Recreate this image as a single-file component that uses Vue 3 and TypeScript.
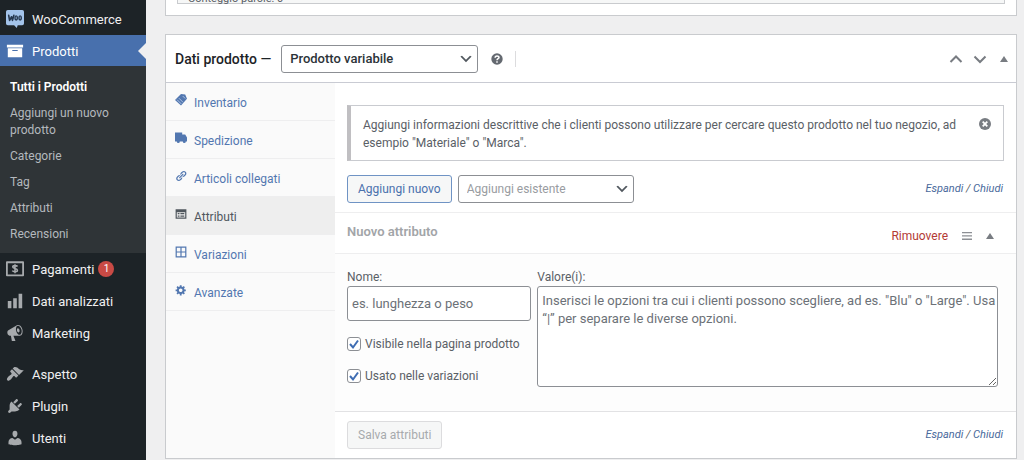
<script setup lang="ts">
import { ref } from 'vue'

interface Tab {
  id: string
  label: string
}

const icons = {
  products: 'M19 3v3H1V3h18zM2 7h16v10H2V7zm11 3V9H7v1h6z',
  chart: 'M18 18V2h-4v16h4zm-6 0V7H8v11h4zm-6 0v-8H2v8h4z',
  megaphone:
    'M18.15 5.94c.46 1.62.38 3.22-.02 4.48-.42 1.28-1.26 2.18-2.3 2.48-.16.06-.26.06-.4.06-.06.02-.12.02-.18.02-.06.02-.14.02-.22.02h-6.8l2.22 5.5c.02.14-.06.26-.14.34-.08.1-.24.16-.34.16H6.95c-.1 0-.26-.06-.34-.16-.08-.08-.16-.2-.14-.34l-1-5.5H4.25l-.02-.02c-.5.06-1.08-.18-1.54-.62s-.88-1.08-1.06-1.88c-.24-.8-.2-1.56-.02-2.2.18-.62.58-1.08 1.06-1.3l.02-.02 9-5.4c.1-.06.18-.1.24-.16.06-.04.14-.08.24-.12.16-.08.28-.12.5-.18 1.04-.3 2.24.1 3.22.98s1.84 2.24 2.26 3.86zm-2.58 5.98h-.02c.4-.1.74-.34 1.04-.7.58-.7.86-1.76.86-3.04 0-.64-.1-1.3-.28-1.98-.34-1.36-1.02-2.5-1.78-3.24s-1.68-1.1-2.46-.88c-.82.22-1.4.96-1.7 2-.32 1.04-.28 2.36.06 3.72.38 1.36 1 2.5 1.8 3.24.78.74 1.62 1.1 2.48.88zm-2.54-7.08c.22-.04.42-.02.62.04.38.16.76.48 1.02 1s.42 1.2.42 1.78c0 .3-.04.56-.12.8-.18.48-.44.84-.86.94-.34.1-.8-.06-1.14-.4s-.64-.86-.78-1.5c-.18-.62-.12-1.24.02-1.72s.48-.84.82-.94z',
  appearance:
    'M14.48 11.06L7.41 3.99l1.5-1.5c.5-.56 2.3-.47 3.51.32 1.21.8 1.43 1.28 2.91 2.1 1.18.64 2.45 1.26 4.45.85zm-.71.71L6.7 4.7 4.93 6.47c-.39.39-.39 1.02 0 1.41l1.06 1.06c.39.39.39 1.03 0 1.42-.6.6-1.43 1.11-2.21 1.69-.35.26-.7.53-1.01.84C1.43 14.23.4 16.08 1.4 17.07c.99 1 2.84-.03 4.18-1.36.31-.31.58-.66.85-1.02.57-.78 1.08-1.61 1.69-2.21.39-.39 1.02-.39 1.41 0l1.06 1.06c.39.39 1.02.39 1.41 0z',
  plugins:
    'M13.11 4.36L9.87 7.6 8 5.73l3.24-3.24c.35-.34 1.05-.2 1.56.32.52.51.66 1.21.31 1.55zm-8 1.77l.91-1.12 9.01 9.01-1.19.84c-.71.71-2.63 1.16-3.82 1.16H6.14L4.9 17.26c-.59.59-1.54.59-2.12 0-.59-.58-.59-1.53 0-2.12l1.24-1.24v-3.88c0-1.13.4-3.19 1.09-3.89zm7.26 3.97l3.24-3.24c.34-.35 1.04-.21 1.55.31.52.51.66 1.21.31 1.55l-3.24 3.25z',
  users:
    'M10 9.25c-2.27 0-2.73-3.44-2.73-3.44C7 4.02 7.82 2 9.97 2c2.16 0 2.98 2.02 2.71 3.81 0 0-.41 3.44-2.68 3.44zm0 2.57L12.72 10c2.39 0 4.52 2.33 4.52 4.53v2.49s-3.65 1.13-7.24 1.13c-3.65 0-7.24-1.13-7.24-1.13v-2.49c0-2.25 1.94-4.48 4.47-4.48z',
  link: 'M17.74 2.76c1.68 1.69 1.68 4.41 0 6.1l-1.53 1.52c-1.12 1.12-2.7 1.47-4.14 1.09l2.62-2.61.76-.77.76-.76c.84-.84.84-2.2 0-3.04-.84-.85-2.2-.85-3.04 0l-.77.76-3.38 3.38c-.37-1.44-.02-3.02 1.1-4.14l1.52-1.53c1.69-1.68 4.42-1.68 6.1 0zM8.59 13.43l5.34-5.34c.42-.42.42-1.1 0-1.52-.44-.43-1.13-.39-1.53 0l-5.33 5.34c-.42.42-.42 1.1 0 1.52.44.43 1.13.39 1.52 0zm-.76 2.29l4.14-4.15c.38 1.44.03 3.02-1.09 4.14l-1.52 1.53c-1.69 1.68-4.41 1.68-6.1 0-1.68-1.68-1.68-4.42 0-6.1l1.53-1.52c1.12-1.12 2.7-1.47 4.14-1.1l-4.14 4.15c-.85.84-.85 2.2 0 3.05.84.84 2.2.84 3.04 0z',
  gear: 'M18 12h-2.18c-.17.7-.44 1.35-.81 1.93l1.54 1.54-2.1 2.1-1.54-1.54c-.58.36-1.23.63-1.91.79V19H8v-2.18c-.68-.16-1.33-.43-1.91-.79l-1.54 1.54-2.12-2.12 1.54-1.54c-.36-.58-.63-1.23-.79-1.91H1V9.03h2.17c.16-.7.44-1.35.8-1.94L2.43 5.55l2.1-2.1 1.54 1.54c.58-.37 1.24-.64 1.93-.81V2h3v2.18c.68.16 1.33.43 1.91.79l1.54-1.54 2.12 2.12-1.54 1.54c.36.59.64 1.24.8 1.94H18V12zm-8.5 1.5c1.66 0 3-1.34 3-3s-1.34-3-3-3-3 1.34-3 3 1.34 3 3 3z',
}

const submenu = ['Tutti i Prodotti', 'Aggiungi un nuovo prodotto', 'Categorie', 'Tag', 'Attributi', 'Recensioni']

const tabs: Tab[] = [
  { id: 'inventory', label: 'Inventario' },
  { id: 'shipping', label: 'Spedizione' },
  { id: 'linked', label: 'Articoli collegati' },
  { id: 'attributes', label: 'Attributi' },
  { id: 'variations', label: 'Variazioni' },
  { id: 'advanced', label: 'Avanzate' },
]

const activeTab = ref('attributes')
const productType = ref('variable')
const existing = ref('')
const attrName = ref('')
const attrValues = ref('')
const visible = ref(true)
const forVariations = ref(true)
</script>

<template>
  <div class="admin">
    <nav class="sidebar">
      <a href="#" class="item first">
        <svg class="ico" viewBox="0 0 20 20">
          <path fill="#a3c3ea" d="M2 0h16a2 2 0 0 1 2 2v13a2 2 0 0 1-2 2h-5l-1 3-3-3H2a2 2 0 0 1-2-2V2a2 2 0 0 1 2-2z" />
          <path fill="none" stroke="#26384f" stroke-width="1.800" stroke-linecap="round" stroke-linejoin="round" d="M3 6l1 5.500 2.200-4 1 4L8.700 6" />
          <ellipse cx="11.300" cy="8.800" rx="1.300" ry="2.300" fill="none" stroke="#26384f" stroke-width="1.600" />
          <ellipse cx="15.700" cy="8.800" rx="1.300" ry="2.300" fill="none" stroke="#26384f" stroke-width="1.600" />
        </svg>
        <span class="text">WooCommerce</span>
      </a>
      <a href="#" class="item current">
        <svg class="ico" viewBox="0 0 20 20"><path fill="#fff" :d="icons.products" /></svg>
        <span class="text">Prodotti</span>
      </a>
      <div class="submenu">
        <a v-for="(s, i) in submenu" :key="s" href="#" :class="{ on: i === 0 }">{{ s }}</a>
      </div>
      <a href="#" class="item">
        <svg class="ico" viewBox="0 0 20 20">
          <path fill="none" stroke="#a7aaad" stroke-width="2" stroke-linejoin="round" d="M1 2.500h18v14.500H1z" />
          <path fill="none" stroke="#a7aaad" stroke-width="1.700" d="M12.800 7.200C12 6 7.500 5.700 7.500 7.800c0 2 5.200 1.300 5.200 3.500 0 2.200-4.700 2-5.700.500M10 4.700v10" />
        </svg>
        <span class="text">Pagamenti</span>
        <span class="count">1</span>
      </a>
      <a href="#" class="item">
        <svg class="ico" viewBox="0 0 20 20"><path :d="icons.chart" /></svg>
        <span class="text">Dati analizzati</span>
      </a>
      <a href="#" class="item">
        <svg class="ico" viewBox="0 0 20 20"><path :d="icons.megaphone" /></svg>
        <span class="text">Marketing</span>
      </a>
      <a href="#" class="item spaced">
        <svg class="ico" viewBox="0 0 20 20"><path :d="icons.appearance" /></svg>
        <span class="text">Aspetto</span>
      </a>
      <a href="#" class="item">
        <svg class="ico" viewBox="0 0 20 20"><path :d="icons.plugins" /></svg>
        <span class="text">Plugin</span>
      </a>
      <a href="#" class="item">
        <svg class="ico" viewBox="0 0 20 20"><path :d="icons.users" /></svg>
        <span class="text">Utenti</span>
      </a>
    </nav>

    <main class="content">
      <section class="editor">
        <div class="wordcount">Conteggio parole: 0</div>
      </section>

      <section class="panel">
        <header class="panel-head">
          <label for="ptype" class="title">Dati prodotto —</label>
          <span class="select-wrap type">
            <select id="ptype" v-model="productType">
              <option value="variable">Prodotto variabile</option>
              <option value="simple">Prodotto semplice</option>
            </select>
            <svg viewBox="0 0 20 20"><path d="M5 6l5 5 5-5 2 1-7 7-7-7 2-1z" /></svg>
          </span>
          <svg class="help" viewBox="0 0 12 12">
            <circle cx="6" cy="6" r="5.700" />
            <path fill="none" stroke="#fff" stroke-width="1.500" d="M4.100 4.700c0-2.500 3.900-2.300 3.900-.2C8 5.800 6 5.700 6 7.300M6 8.200v1.500" />
          </svg>
          <span class="divider"></span>
          <div class="handles">
            <button type="button" aria-label="Sposta su">
              <svg viewBox="0 0 14 14"><path class="line" d="M1.500 10L7 4.500l5.500 5.500" /></svg>
            </button>
            <button type="button" aria-label="Sposta giù">
              <svg viewBox="0 0 14 14"><path class="line" d="M1.500 4.500L7 10l5.500-5.500" /></svg>
            </button>
            <button type="button" aria-label="Chiudi pannello" class="small">
              <svg viewBox="0 0 8 8"><path d="M0 7l4-6 4 6z" /></svg>
            </button>
          </div>
        </header>

        <div class="panel-body">
          <div class="tabs">
            <a v-for="t in tabs" :key="t.id" href="#" :class="{ active: t.id === activeTab }" @click.prevent="activeTab = t.id">
              <svg viewBox="0 0 20 20">
                <template v-if="t.id === 'inventory'">
                  <path d="M0 10L10 0l7 1 3 7-10 11z" />
                  <path fill="none" stroke="#c9d8ee" stroke-width="1.300" d="M3.500 9.500l7 7M6.500 7l7 7M13 3.500l4 4" />
                </template>
                <path v-else-if="t.id === 'shipping'" d="M0 1h12v3h5l3 5v7h-2a2.500 2.500 0 0 1-5 0H8a2.500 2.500 0 0 1-5 0H0z" />
                <path v-else-if="t.id === 'linked'" :d="icons.link" />
                <path v-else-if="t.id === 'attributes'" fill-rule="evenodd" d="M1 2h18v16H1zM3 7v9h14V7zM4.500 8.500h3v2h-3zM9 8.500h6.500v2H9zM4.500 12.500h3v2h-3zM9 12.500h6.500v2H9z" />
                <path v-else-if="t.id === 'variations'" fill-rule="evenodd" d="M1 1h18v18H1zM3 3v6h6V3zM11 3v6h6V3zM3 11v6h6v-6zM11 11v6h6v-6z" />
                <path v-else :d="icons.gear" />
              </svg>
              <span class="text">{{ t.label }}</span>
            </a>
          </div>

          <div class="pane">
            <div class="notice">
              <p>Aggiungi informazioni descrittive che i clienti possono utilizzare per cercare questo prodotto nel tuo negozio, ad esempio "Materiale" o "Marca".</p>
              <button type="button" aria-label="Ignora avviso">
                <svg viewBox="0 0 12 12">
                  <circle cx="6" cy="6" r="6" />
                  <path fill="none" stroke="#fff" stroke-width="1.800" d="M3.700 3.700l4.600 4.600M8.300 3.700L3.700 8.300" />
                </svg>
              </button>
            </div>

            <div class="toolbar">
              <button type="button" class="btn primary">Aggiungi nuovo</button>
              <span class="select-wrap existing">
                <select v-model="existing" aria-label="Aggiungi esistente">
                  <option value="">Aggiungi esistente</option>
                </select>
                <svg viewBox="0 0 20 20"><path d="M5 6l5 5 5-5 2 1-7 7-7-7 2-1z" /></svg>
              </span>
              <span class="toggle"><a href="#">Espandi</a> / <a href="#">Chiudi</a></span>
            </div>

            <div class="attr-head">
              <h3>Nuovo attributo</h3>
              <div class="attr-actions">
                <a href="#" class="remove">Rimuovere</a>
                <svg class="grip" viewBox="0 0 10 8"><path d="M0 0h10v1.300H0zM0 3.300h10v1.300H0zM0 6.600h10v1.300H0z" /></svg>
                <svg class="tri" viewBox="0 0 8 8"><path d="M0 7l4-6 4 6z" /></svg>
              </div>
            </div>

            <div class="attr-form">
              <div class="col-name">
                <label for="aname">Nome:</label>
                <input id="aname" v-model="attrName" type="text" placeholder="es. lunghezza o peso" />
                <label class="check">
                  <span class="box">
                    <input v-model="visible" type="checkbox" />
                    <svg v-if="visible" viewBox="0 0 14 14"><path d="M3 7l3 3.500L11 3.500" /></svg>
                  </span>
                  Visibile nella pagina prodotto
                </label>
                <label class="check">
                  <span class="box">
                    <input v-model="forVariations" type="checkbox" />
                    <svg v-if="forVariations" viewBox="0 0 14 14"><path d="M3 7l3 3.500L11 3.500" /></svg>
                  </span>
                  Usato nelle variazioni
                </label>
              </div>
              <div class="col-values">
                <label for="avals">Valore(i):</label>
                <textarea id="avals" v-model="attrValues" placeholder="Inserisci le opzioni tra cui i clienti possono scegliere, ad es. &quot;Blu&quot; o &quot;Large&quot;. Usa “|” per separare le diverse opzioni."></textarea>
              </div>
            </div>

            <div class="attr-foot">
              <button type="button" class="btn" disabled>Salva attributi</button>
              <span class="toggle"><a href="#">Espandi</a> / <a href="#">Chiudi</a></span>
            </div>
          </div>
        </div>
      </section>
    </main>
  </div>
</template>

<style>
body {
  background: #efeff0;
}
</style>

<style scoped>
.admin {
  display: flex;
  height: 100vh;
  overflow: hidden;
  font-family: Roboto, 'Open Sans', sans-serif;
  font-size: 12px;
  line-height: 18px;
  color: #5a6066;
}
.admin *,
.admin *::before {
  box-sizing: border-box;
}
a {
  color: inherit;
  text-decoration: none;
}
svg {
  display: block;
  flex: none;
  fill: currentColor;
}
button {
  margin: 0;
  padding: 0;
  border: 0;
  background: none;
  color: inherit;
  font: inherit;
}
.text {
  padding-top: 2px;
}

.sidebar {
  flex: none;
  width: 146px;
  padding-top: 3px;
  background: #1d2327;
}
.item {
  position: relative;
  display: flex;
  align-items: center;
  height: 32px;
  padding-left: 6px;
  color: #f0f0f1;
  font-size: 13px;
}
.ico {
  width: 18px;
  height: 18px;
  margin-right: 8px;
  fill: #a7aaad;
}
.item.current {
  height: 31px;
  background: #4870ad;
  color: #fff;
}
.item.current::after {
  content: '';
  position: absolute;
  top: 8px;
  right: 0;
  border: 8px solid transparent;
  border-left-width: 0;
  border-right-color: #efeff0;
}
.item.spaced {
  margin-top: 9px;
}
.count {
  width: 16px;
  height: 16px;
  margin-left: 4px;
  border-radius: 8px;
  background: #c94a45;
  color: #fff;
  font-size: 10px;
  line-height: 16px;
  text-align: center;
}
.submenu {
  display: flex;
  flex-direction: column;
  gap: 9px;
  padding: 13px 20px 10px 10px;
  background: #2f3437;
  color: #b4b9be;
  line-height: 17px;
}
.submenu .on {
  color: #fff;
  font-weight: 600;
}

.content {
  flex: 1;
  min-width: 0;
  padding: 0 7px 0 19px;
}
.editor {
  display: flex;
  flex-direction: column;
  justify-content: flex-end;
  height: 16px;
  padding: 0 11px 11px;
  border: 1px solid #c9cbce;
  border-top: 0;
  background: #fff;
}
.wordcount {
  flex: none;
  padding-left: 10px;
  border: 1px solid #c9cbce;
  background: #f6f7f7;
  font-size: 11px;
  line-height: 9px;
}
.panel {
  margin-top: 18px;
  border: 1px solid #c9cbce;
  background: #fff;
}
.panel-head {
  display: flex;
  align-items: center;
  height: 48px;
  padding: 0 8px 0 9px;
  border-bottom: 1px solid #c9cbd3;
}
.title {
  color: #1d2327;
  font-size: 14px;
  font-weight: 500;
}
.select-wrap {
  position: relative;
  display: block;
}
.select-wrap select {
  display: block;
  width: 100%;
  height: 28px;
  margin: 0;
  padding: 0 24px 0 8px;
  appearance: none;
  border: 1px solid #8c8f94;
  border-radius: 3px;
  background: #fff;
  color: #2c3338;
  font: inherit;
  font-size: 13px;
}
.select-wrap svg {
  position: absolute;
  top: 6px;
  right: 4px;
  width: 16px;
  height: 16px;
  color: #50575e;
  pointer-events: none;
}
.type {
  width: 197px;
  margin-left: 10px;
}
.type select {
  font-weight: 500;
}
.existing {
  width: 176px;
  margin-left: 6px;
}
.existing select {
  color: #999ca1;
  font-size: 12px;
}
.help {
  width: 12px;
  height: 12px;
  margin-left: 13px;
  color: #646970;
}
.divider {
  width: 1px;
  height: 16px;
  margin-left: 12px;
  background: #dcdcde;
}
.handles {
  display: flex;
  align-items: center;
  gap: 10px;
  margin-left: auto;
  color: #787c82;
}
.handles svg {
  width: 14px;
  height: 14px;
}
.handles .small {
  margin-left: 3px;
}
.handles .small svg {
  width: 8px;
  height: 8px;
}
.line {
  fill: none;
  stroke: currentColor;
  stroke-width: 2;
}

.panel-body {
  display: flex;
}
.tabs {
  flex: none;
  width: 169px;
  background: #fafafa;
  color: #5277b0;
}
.tabs a {
  display: flex;
  align-items: center;
  gap: 7px;
  height: 38px;
  padding: 0 9px;
  border-bottom: 1px solid #eeeeef;
}
.tabs svg {
  width: 12px;
  height: 12px;
  margin-bottom: 3px;
}
.tabs .active {
  background: #eeeeee;
  color: #50575e;
}

.pane {
  flex: 1;
  min-width: 0;
  padding-top: 22px;
}
.notice {
  display: flex;
  align-items: flex-start;
  margin: 0 12px;
  padding: 10px 12px 8px 12px;
  border: 1px solid #c9cbd0;
  border-left: 4px solid #c0bfc2;
}
.notice p {
  flex: 1;
  margin: 0;
}
.notice button {
  margin: 2px 0 0 14px;
  color: #787c82;
}
.notice button svg {
  width: 12px;
  height: 12px;
}
.toolbar {
  display: flex;
  align-items: center;
  padding: 14px 13px 9px 12px;
}
.btn {
  height: 28px;
  padding: 0 10px;
  border: 1px solid #dcdcde;
  border-radius: 3px;
  background: #f6f7f7;
  color: #a7aaad;
}
.btn.primary {
  border-color: #6f93c4;
  color: #4a71ad;
}
.toggle {
  margin-left: auto;
  font-size: 11px;
  font-style: italic;
}
.toggle a {
  color: #4a6a9c;
}
.attr-head {
  display: flex;
  align-items: flex-start;
  height: 42px;
  padding: 10px 22px 0 12px;
  border-top: 1px solid #eeeeef;
  border-bottom: 1px solid #eeeeef;
}
.attr-head h3 {
  flex: 1;
  margin: 0;
  color: #a2a5a8;
  font-size: 13px;
  font-weight: 600;
}
.attr-actions {
  display: flex;
  align-items: center;
  gap: 14px;
  padding-top: 4px;
}
.remove {
  color: #b33a35;
}
.grip {
  width: 10px;
  height: 8px;
  color: #8c8f94;
}
.tri {
  width: 8px;
  height: 8px;
  color: #787c82;
}
.attr-form {
  display: flex;
  gap: 6px;
  padding: 14px 18px 24px 12px;
  background: #fdfdfd;
}
.col-name {
  flex: 2;
  min-width: 0;
}
.col-values {
  flex: 5;
  min-width: 0;
}
.col-name > label,
.col-values > label {
  display: block;
}
.col-name > input,
textarea {
  display: block;
  width: 100%;
  margin: 0;
  border: 1px solid #8c8f94;
  border-radius: 3px;
  background: #fff;
  color: #2c3338;
  font: inherit;
}
.col-name > input {
  height: 35px;
  padding: 0 4px;
  font-size: 13px;
}
textarea {
  height: 101px;
  padding: 5px 0 5px 4px;
  font-size: 13px;
  line-height: 18px;
  resize: both;
}
input::placeholder,
textarea::placeholder {
  color: #6c7177;
}
.col-name > .check {
  display: flex;
  align-items: center;
  gap: 4px;
  margin-top: 14px;
  white-space: nowrap;
}
.box {
  position: relative;
  display: block;
  width: 14px;
  height: 14px;
}
.box input {
  display: block;
  width: 14px;
  height: 14px;
  margin: 0;
  appearance: none;
  border: 1px solid #8c8f94;
  border-radius: 3px;
  background: #fff;
}
.box svg {
  position: absolute;
  inset: 0;
  width: 14px;
  height: 14px;
  fill: none;
  stroke: #3f6db3;
  stroke-width: 2;
  pointer-events: none;
}
.attr-foot {
  display: flex;
  align-items: center;
  height: 47px;
  padding: 0 13px 0 12px;
  border-top: 1px solid #e2e2e4;
}
</style>
